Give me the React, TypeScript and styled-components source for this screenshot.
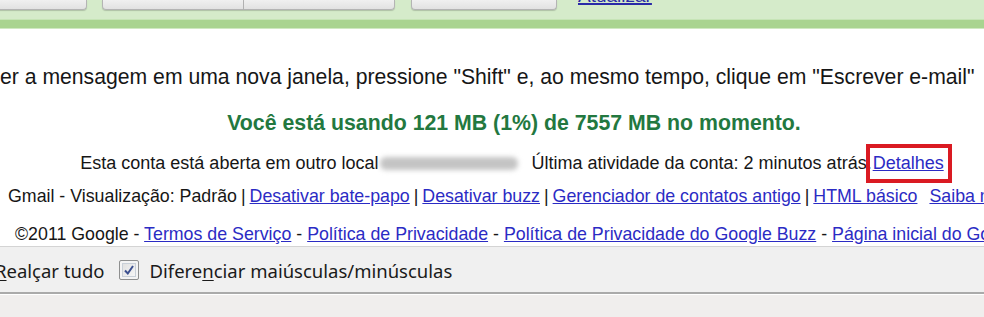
import React from 'react';
import styled, { createGlobalStyle } from 'styled-components';

const GlobalStyle = createGlobalStyle`
  html, body {
    margin: 0;
    padding: 0;
    background: #fff;
  }
  body {
    width: 984px;
    height: 317px;
    overflow: hidden;
    font-family: "Liberation Sans", Arial, sans-serif;
  }
`;

const Page = styled.div`
  width: 984px;
  height: 317px;
  display: flex;
  flex-direction: column;
  overflow: hidden;
`;

const TopBar = styled.div`
  height: 19px;
  background: #d5ebca;
  border-bottom: 1px solid #c6e4b6;
  display: flex;
  align-items: flex-start;
`;

const ButtonGroup = styled.div<{ $gap: number }>`
  display: flex;
  margin-left: ${p => p.$gap}px;
`;

const ToolButton = styled.div<{ $w: number; $round?: 'left' | 'right' | 'both' }>`
  width: ${p => p.$w}px;
  height: 9px;
  background: linear-gradient(#f0f0f0, #e2e2e2);
  border: 1px solid #b4b4b4;
  border-top: none;
  border-radius: ${p =>
    p.$round === 'left' ? '0 0 0 4px' : p.$round === 'right' ? '0 0 4px 0' : '0 0 4px 4px'};
  box-shadow: 0 1px 1px rgba(0, 0, 0, 0.18);
  & + & {
    border-left: none;
  }
`;

const ClippedLink = styled.div`
  margin-left: 21px;
  height: 5px;
  overflow: hidden;
  display: flex;
  align-items: flex-end;
  a {
    font-size: 19px;
    line-height: 18px;
    color: #2a2aa8;
    text-decoration: underline;
    text-decoration-thickness: 2px;
  }
`;

const Stripe = styled.div`
  height: 8px;
  background: #a9d490;
  border-bottom: 1px solid #cfe9c2;
`;

const Content = styled.div`
  color: #161616;
  white-space: nowrap;
`;

const Tip = styled.div`
  margin-top: 36px;
  font-size: 21.2px;
  line-height: 24px;
`;

const Quota = styled.div`
  margin-top: 22px;
  padding-left: 44px;
  text-align: center;
  font-size: 21.3px;
  line-height: 24px;
  font-weight: bold;
  color: #23783f;
`;

const Session = styled.div`
  margin-top: 17px;
  padding-left: 40px;
  text-align: center;
  font-size: 18px;
  line-height: 22px;
`;

const Blurred = styled.span`
  display: inline-block;
  width: 138px;
  height: 13px;
  margin: 0 13px 0 2px;
  vertical-align: -1px;
  background: #c4c4c4;
  border-radius: 6px;
  filter: blur(2.5px);
`;

const Link = styled.a`
  color: #2b2bc4;
  text-decoration: underline;
  cursor: pointer;
`;

const Marked = styled(Link)`
  position: relative;
  margin-left: 1px;
  &::after {
    content: '';
    position: absolute;
    left: -7px;
    right: -8px;
    top: -9px;
    bottom: -10px;
    border: 4px solid #da1a22;
  }
`;

const FooterLine = styled.div<{ $indent: number; $top: number }>`
  margin-top: ${p => p.$top}px;
  padding-left: ${p => p.$indent}px;
  font-size: 17.8px;
  line-height: 22px;
`;

const Sep = styled.span`
  margin: 0 4px;
`;

const Extra = styled(Link)`
  margin-left: 12px;
`;

const FindBar = styled.div`
  margin-top: 1px;
  height: 45px;
  background: #f0f0f0;
  border-top: 1px solid #d4d4d4;
  display: flex;
  align-items: center;
  font-family: "Noto Sans", "Open Sans", sans-serif;
  font-size: 18.5px;
  color: #1a1a1a;
  white-space: nowrap;
`;

const FindLabel = styled.span<{ $shift?: number }>`
  margin-left: ${p => p.$shift ?? 0}px;
  padding-top: 2px;
  u {
    text-decoration: underline;
    text-underline-offset: 2px;
  }
`;

const CheckBox = styled.span`
  width: 18px;
  height: 18px;
  margin: 0 11px 0 14px;
  border: 1px solid #8e8f8f;
  border-radius: 2px;
  background: linear-gradient(135deg, #dcdcdc, #fbfbfb);
  box-shadow: inset 0 0 0 2px #f4f4f4, inset 0 0 0 3px #c9d0d8;
  display: flex;
  align-items: center;
  justify-content: center;
`;

const BottomArea = styled.div`
  flex: 1;
  border-top: 2px solid #aaaaaa;
  box-shadow: inset 0 1px 0 #ffffff;
  background: #f0eeed;
`;

export default function App() {
  return (
    <Page>
      <GlobalStyle />
      <TopBar>
        <ButtonGroup $gap={-5}>
          <ToolButton $w={90} />
        </ButtonGroup>
        <ButtonGroup $gap={15}>
          <ToolButton $w={140} $round="left" />
          <ToolButton $w={150} $round="right" />
        </ButtonGroup>
        <ButtonGroup $gap={16}>
          <ToolButton $w={144} />
        </ButtonGroup>
        <ClippedLink>
          <a>Atualizar</a>
        </ClippedLink>
      </TopBar>
      <Stripe />
      <Content>
        <Tip>er a mensagem em uma nova janela, pressione "Shift" e, ao mesmo tempo, clique em "Escrever e-mail"</Tip>
        <Quota>Você está usando 121 MB (1%) de 7557 MB no momento.</Quota>
        <Session>
          Esta conta está aberta em outro local<Blurred />Última atividade da conta: 2 minutos atrás.
          <Marked>Detalhes</Marked>
        </Session>
        <FooterLine $indent={8} $top={11}>
          Gmail - Visualização: Padrão<Sep>|</Sep>
          <Link>Desativar bate-papo</Link>
          <Sep>|</Sep>
          <Link>Desativar buzz</Link>
          <Sep>|</Sep>
          <Link>Gerenciador de contatos antigo</Link>
          <Sep>|</Sep>
          <Link>HTML básico</Link>
          <Extra>Saiba mais</Extra>
        </FooterLine>
        <FooterLine $indent={15} $top={16}>
          ©2011 Google - <Link>Termos de Serviço</Link> - <Link>Política de Privacidade</Link> -{' '}
          <Link>Política de Privacidade do Google Buzz</Link> - <Link>Página inicial do Google</Link>
        </FooterLine>
      </Content>
      <FindBar>
        <FindLabel $shift={-5}>
          <u>R</u>ealçar tudo
        </FindLabel>
        <CheckBox>
          <svg width="12" height="12" viewBox="0 0 12 12">
            <path d="M2 6.5 L4.8 9.5 L10 2" fill="none" stroke="#3b4f8f" strokeWidth="2" />
          </svg>
        </CheckBox>
        <FindLabel>
          Difere<u>n</u>ciar maiúsculas/minúsculas
        </FindLabel>
      </FindBar>
      <BottomArea />
    </Page>
  );
}
